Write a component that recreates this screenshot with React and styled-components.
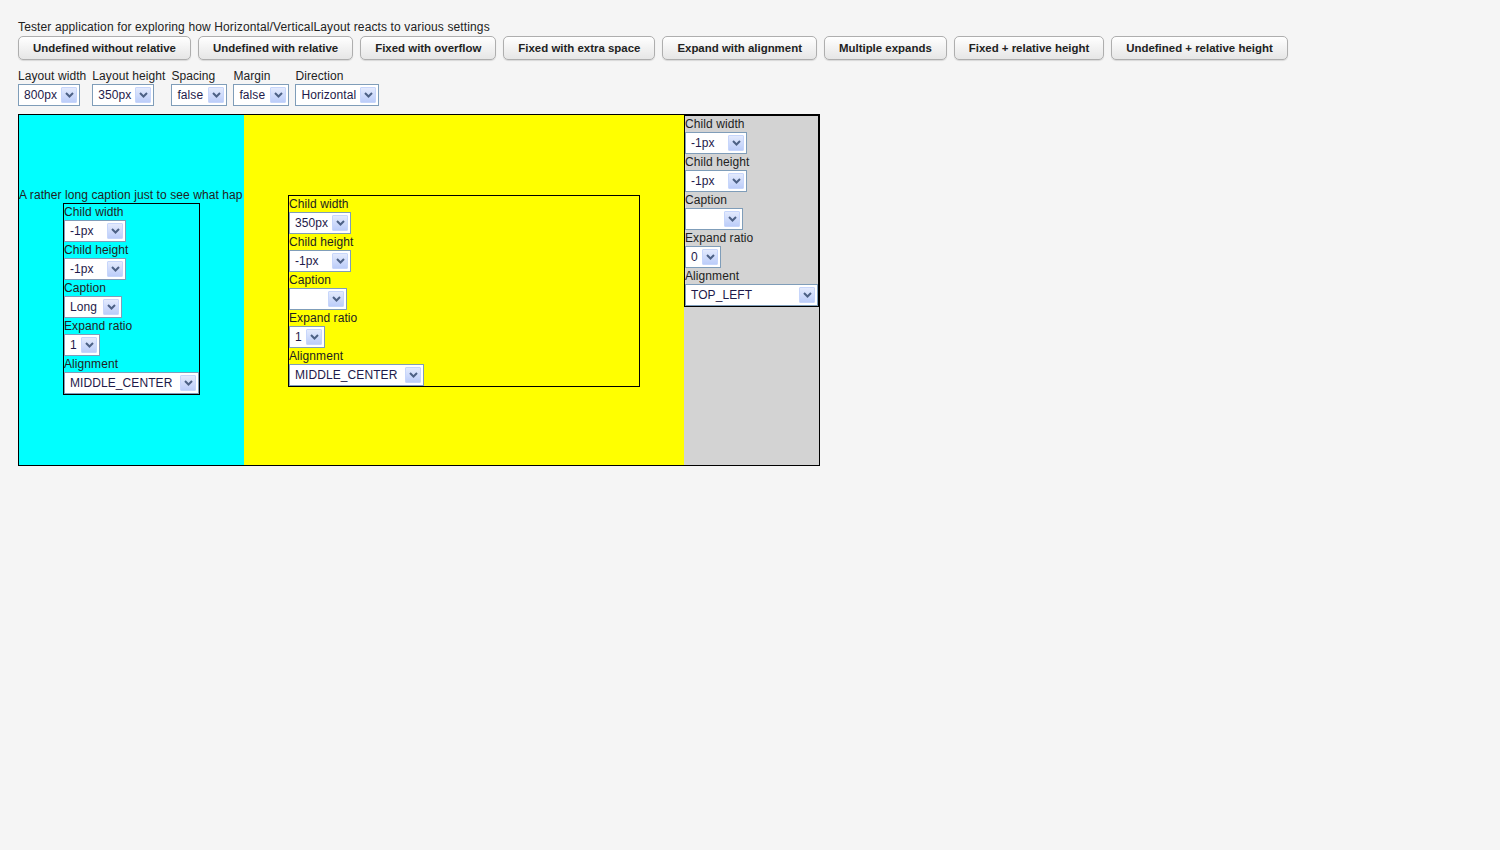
import React from "react";
import styled, { createGlobalStyle } from "styled-components";

const GlobalStyle = createGlobalStyle`
  html, body {
    margin: 0;
    padding: 0;
    background: #f5f5f5;
  }
  body {
    font-family: "Liberation Sans", Arial, sans-serif;
    font-size: 12px;
    letter-spacing: 0.08px;
    color: #222;
  }
`;

const Page = styled.div`
  padding: 19px 18px 0 18px;
  height: 850px;
  box-sizing: border-box;
`;

const Title = styled.div`
  line-height: 16px;
  height: 16px;
  margin-bottom: 1px;
  letter-spacing: 0.13px;
`;

const ButtonBar = styled.div`
  display: flex;
  gap: 7px;
  margin-bottom: 8px;
`;

const PresetButton = styled.button`
  height: 24px;
  padding: 0 14px;
  border: 1px solid #aeaeae;
  border-radius: 5px;
  background: linear-gradient(#ffffff, #f2f2f2 50%, #e6e6e6);
  box-shadow: 0 1px 1px rgba(0, 0, 0, 0.12);
  font-family: "Liberation Sans", Arial, sans-serif;
  font-size: 11.45px;
  font-weight: bold;
  letter-spacing: 0;
  color: #222;
  white-space: nowrap;
  cursor: pointer;
`;

const SettingsRow = styled.div`
  display: flex;
  gap: 6px;
  margin-bottom: 8px;
  padding-top: 1px;
`;

const Setting = styled.div`
  display: flex;
  flex-direction: column;
  align-items: flex-start;
`;

const Label = styled.div`
  line-height: 16px;
  height: 16px;
  white-space: nowrap;
`;

const SettingLabel = styled(Label)`
  height: 15px;
  line-height: 15px;
`;

const SelectBox = styled.div`
  position: relative;
  box-sizing: border-box;
  width: ${(p) => (p.$full ? "100%" : `${p.$w}px`)};
  height: 22px;
  border: 1px solid #7f9db9;
  background: #fff;
  line-height: 20px;
  padding-left: 5px;
  color: #1e1a4a;
  white-space: nowrap;
  overflow: hidden;
`;

const Arrow = styled.span`
  position: absolute;
  right: 2px;
  top: 2px;
  width: 16px;
  height: 16px;
  box-sizing: border-box;
  border: 1px solid #c7d6fb;
  border-radius: 1px;
  background: linear-gradient(#e3eafd, #bccdf9);
  display: flex;
  align-items: center;
  justify-content: center;
`;

const Select = ({ value, w, full }) => (
  <SelectBox $w={w} $full={full}>
    {value}
    <Arrow>
      <svg width="9" height="6" viewBox="0 0 9 6">
        <path d="M1 1 L4.5 4.5 L8 1" fill="none" stroke="#4d6185" strokeWidth="2" />
      </svg>
    </Arrow>
  </SelectBox>
);

const Layout = styled.div`
  display: flex;
  width: 800px;
  height: 350px;
  border: 1px solid #000;
`;

const Cell = styled.div`
  width: ${(p) => p.$w}px;
  flex: none;
  background: ${(p) => p.$bg};
  overflow: hidden;
  display: flex;
  flex-direction: column;
  justify-content: ${(p) => (p.$top ? "flex-start" : "center")};
  align-items: ${(p) => (p.$top ? "stretch" : "center")};
  padding-top: ${(p) => (p.$top ? 0 : 1)}px;
  box-sizing: border-box;
`;

const Slot = styled.div`
  align-self: stretch;
  display: flex;
  flex-direction: column;
  align-items: center;
  overflow: hidden;
`;

const CaptionText = styled.div`
  align-self: stretch;
  line-height: 16px;
  height: 16px;
  white-space: nowrap;
  overflow: hidden;
`;

const ChildBox = styled.div`
  box-sizing: border-box;
  width: ${(p) => (p.$w ? `${p.$w}px` : "auto")};
  border: 1px solid #000;
  display: flex;
  flex-direction: column;
  align-items: flex-start;
`;

const Field = ({ label, children }) => (
  <>
    <Label>{label}</Label>
    {children}
  </>
);

const ChildControls = ({ width, height, caption, ratio, align, full }) => (
  <>
    <Field label="Child width">
      <Select value={width} w={62} />
    </Field>
    <Field label="Child height">
      <Select value={height} w={62} />
    </Field>
    <Field label="Caption">
      <Select value={caption} w={58} />
    </Field>
    <Field label="Expand ratio">
      <Select value={ratio} w={36} />
    </Field>
    <Field label="Alignment">
      <Select value={align} w={135} full={full} />
    </Field>
  </>
);

const presets = [
  "Undefined without relative",
  "Undefined with relative",
  "Fixed with overflow",
  "Fixed with extra space",
  "Expand with alignment",
  "Multiple expands",
  "Fixed + relative height",
  "Undefined + relative height",
];

const settings = [
  { label: "Layout width", value: "800px", w: 62 },
  { label: "Layout height", value: "350px", w: 62 },
  { label: "Spacing", value: "false", w: 56 },
  { label: "Margin", value: "false", w: 56 },
  { label: "Direction", value: "Horizontal", w: 84 },
];

export default function App() {
  return (
    <Page>
      <GlobalStyle />
      <Title>
        Tester application for exploring how Horizontal/VerticalLayout reacts to various settings
      </Title>
      <ButtonBar>
        {presets.map((p) => (
          <PresetButton key={p}>{p}</PresetButton>
        ))}
      </ButtonBar>
      <SettingsRow>
        {settings.map((s) => (
          <Setting key={s.label}>
            <SettingLabel>{s.label}</SettingLabel>
            <Select value={s.value} w={s.w} />
          </Setting>
        ))}
      </SettingsRow>
      <Layout>
        <Cell $w={225} $bg="#00ffff">
          <Slot>
            <CaptionText>A rather long caption just to see what hap</CaptionText>
            <ChildBox>
              <ChildControls width="-1px" height="-1px" caption="Long" ratio="1" align="MIDDLE_CENTER" />
            </ChildBox>
          </Slot>
        </Cell>
        <Cell $w={440} $bg="#ffff00">
          <ChildBox $w={352}>
            <ChildControls width="350px" height="-1px" caption="" ratio="1" align="MIDDLE_CENTER" />
          </ChildBox>
        </Cell>
        <Cell $w={135} $bg="#d3d3d3" $top>
          <ChildBox>
            <ChildControls width="-1px" height="-1px" caption="" ratio="0" align="TOP_LEFT" full />
          </ChildBox>
        </Cell>
      </Layout>
    </Page>
  );
}
